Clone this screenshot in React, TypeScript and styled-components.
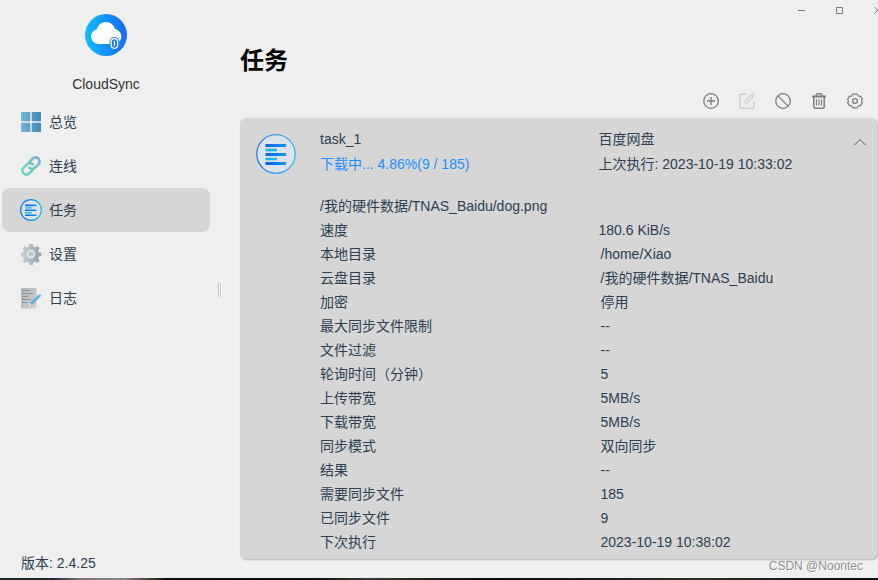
import React, { useState } from "react";
import styled, { createGlobalStyle } from "styled-components";

const GlobalStyle = createGlobalStyle`
  * { box-sizing: border-box; }
  html, body { margin: 0; }
  body {
    background: #efefef;
    color: #2c3e50;
    font-family: "Liberation Sans", "Noto Sans CJK SC", sans-serif;
    font-size: 14px;
    line-height: 24px;
    overflow-x: hidden;
  }
  button { font: inherit; color: inherit; border: 0; padding: 0; background: none; cursor: pointer; }
`;

const AppWindow = styled.div`
  min-height: 100vh;
  display: flex;
  flex-direction: column;
`;

const Body = styled.div`
  flex: 1;
  display: flex;
`;

const Taskbar = styled.div`
  height: 2px;
  background: linear-gradient(90deg, #23262c 0 6%, #77736e 9%, #8c867d 14%, #12110f 19%, #0b0a09 35%, #3b3833 42%, #0c0b0a 55%, #2f2c29 80%, #0b0a09);
`;

const Sidebar = styled.aside`
  width: 212px;
  flex: none;
  padding: 14px 2px 3px;
  display: flex;
  flex-direction: column;
`;

const Brand = styled.div`
  display: flex;
  flex-direction: column;
  align-items: center;
  gap: 16px;
  padding-bottom: 4px;
  color: #333;
`;

const Nav = styled.nav`
  flex: 1;
  display: flex;
  flex-direction: column;
`;

const NavLink = styled.a<{ $active: boolean }>`
  height: 44px;
  display: flex;
  align-items: center;
  gap: 7px;
  padding: 0 18px;
  border-radius: 8px;
  color: inherit;
  text-decoration: none;
  background: ${(p) => (p.$active ? "#d6d6d6" : "transparent")};
`;

const Version = styled.div`
  padding: 0 19px;
`;

const Splitter = styled.div`
  width: 16px;
  flex: none;
  display: flex;
  align-items: center;
  justify-content: center;
`;

const Grip = styled.span`
  width: 4px;
  height: 15px;
  background: linear-gradient(90deg, #c2c2c2 25%, #fff 25% 50%, #c2c2c2 50% 75%, #fff 75%);
`;

const Main = styled.main`
  flex: 1;
  min-width: 0;
  padding: 0 1px 0 12px;
  display: flex;
  flex-direction: column;
`;

const TitleBar = styled.div`
  height: 20px;
  display: flex;
  justify-content: flex-end;
  margin-right: -20px;
`;

const WindowButton = styled.button`
  width: 38px;
  height: 20px;
  display: flex;
  align-items: center;
  justify-content: center;
`;

const PageTitle = styled.h1`
  margin: 0;
  padding: 24px 0 15px;
  font-size: 24px;
  line-height: 34px;
  font-weight: 700;
  color: #000;
`;

const Toolbar = styled.div`
  height: 16px;
  padding-right: 14px;
  margin-bottom: 9px;
  display: flex;
  justify-content: flex-end;
  gap: 20px;
`;

const ToolButton = styled.button`
  width: 16px;
  height: 16px;
  display: flex;
  color: #7b7b7b;
  &:disabled { color: #d2cfcd; cursor: default; }
`;

const Card = styled.section`
  background: #d6d6d6;
  border-radius: 6px;
  box-shadow: 1px 1px 2px rgba(0, 0, 0, 0.25);
  padding: 9px 0 5px;
`;

const CardHeader = styled.header`
  display: grid;
  grid-template-columns: 80px 1fr 1fr;
  position: relative;
`;

const TaskIcon = styled.div`
  padding: 7px 16px 0;
  display: flex;
`;

const Pair = styled.div`
  display: flex;
  flex-direction: column;
  gap: 1px;
`;

const Progress = styled.span`
  color: #1b8fff;
`;

const Collapse = styled.button`
  position: absolute;
  top: 9px;
  right: 11px;
  width: 12px;
  height: 12px;
  display: flex;
  color: #555;
`;

const Details = styled.div`
  padding: 18px 0 0 80px;
`;

const List = styled.dl`
  margin: 0;
`;

const Row = styled.div`
  display: grid;
  grid-template-columns: 1fr 1fr;
`;

const Term = styled.dt``;

const Value = styled.dd<{ $indent: boolean }>`
  margin: 0;
  padding-left: ${(p) => (p.$indent ? 2 : 0)}px;
`;

const Watermark = styled.footer`
  align-self: flex-end;
  padding-right: 14px;
  font-size: 12px;
  line-height: 14px;
  color: #8d8d8d;
  text-shadow: 1px 1px 0 #fff;
`;

const Logo = () => (
  <svg width="42" height="42" viewBox="0 0 42 42" aria-hidden="true">
    <defs>
      <linearGradient id="logo" x1="0" x2="1">
        <stop offset="0" stopColor="#10bdfd" />
        <stop offset="1" stopColor="#1767f3" />
      </linearGradient>
    </defs>
    <circle cx="21" cy="21" r="21" fill="url(#logo)" />
    <path d="M13.500 30a7.500 7.500 0 0 1-1.700-14.800A9.500 9.500 0 0 1 30.200 15.100 7.500 7.500 0 0 1 29 30z" fill="#fff" />
    <path d="M24.500 31V28a5 5 0 0 1 10 0v3z" fill="#1f8bf8" />
    <rect x="26.200" y="24.700" width="6.400" height="9.600" rx="3.200" fill="#1a78f5" stroke="#fff" strokeWidth="1.300" />
    <path d="M29.400 26.800v5.400" stroke="#fff" strokeWidth="1.300" />
  </svg>
);

const OverviewIcon = () => (
  <svg width="22" height="22" viewBox="0 0 22 22" aria-hidden="true">
    <defs>
      <linearGradient id="tiles" x1="0" x2="22" gradientUnits="userSpaceOnUse">
        <stop offset="0" stopColor="#77b9d8" />
        <stop offset="1" stopColor="#4084b8" />
      </linearGradient>
    </defs>
    <path
      fill="url(#tiles)"
      d="M2 1h7.300q1 0 1 1v7.300q0 1-1 1H2q-1 0-1-1V2q0-1 1-1zM12.700 1H20q1 0 1 1v7.300q0 1-1 1h-7.300q-1 0-1-1V2q0-1 1-1zM2 11.700h7.300q1 0 1 1V20q0 1-1 1H2q-1 0-1-1v-7.300q0-1 1-1zM12.700 11.700H20q1 0 1 1V20q0 1-1 1h-7.300q-1 0-1-1v-7.300q0-1 1-1z"
    />
  </svg>
);

const LinkIcon = () => (
  <svg width="22" height="22" viewBox="0 0 22 22" aria-hidden="true">
    <defs>
      <linearGradient id="chain" x1="1" x2="21" y1="14" y2="8" gradientUnits="userSpaceOnUse">
        <stop offset="0" stopColor="#68dfb8" />
        <stop offset="1" stopColor="#79acd0" />
      </linearGradient>
    </defs>
    <g fill="none" stroke="url(#chain)" strokeWidth="2.600" strokeLinecap="round">
      <path d="M9.300 12.700a4 4 0 0 0 5.700 0l3.400-3.400a4 4 0 0 0-5.700-5.700L9.900 6.400" />
      <path d="M12.700 9.300a4 4 0 0 0-5.700 0l-3.400 3.400a4 4 0 0 0 5.700 5.700l2.800-2.800" />
    </g>
  </svg>
);

const TaskListIcon = ({ size, id }: { size: number; id: string }) => (
  <svg width={size} height={size} viewBox="0 0 40 40" aria-hidden="true">
    <defs>
      <linearGradient id={`${id}-ring`} x1="0" x2="1">
        <stop offset="0" stopColor="#0868eb" />
        <stop offset="1" stopColor="#17b5f4" />
      </linearGradient>
      <linearGradient id={`${id}-bar`} x1="9" x2="30" gradientUnits="userSpaceOnUse">
        <stop offset="0" stopColor="#0461ea" />
        <stop offset="1" stopColor="#1597f5" />
      </linearGradient>
    </defs>
    <circle cx="20" cy="20" r={size > 30 ? 19.2 : 18.8} fill="#dbe3ec" stroke={`url(#${id}-ring)`} strokeWidth={size > 30 ? 1.1 : 2} />
    <path d="M9.500 10h20.500v3H9.500zM9.500 19h20.500v3H9.500zM9.500 28h20.500v3H9.500z" fill={`url(#${id}-bar)`} />
    <path d="M9.500 14.800h11.500v2.400H9.500zM9.500 23.800h11.500v2.400H9.500z" fill="#15b9ef" />
  </svg>
);

const SettingsIcon = () => (
  <svg width="22" height="22" viewBox="0 0 22 22" aria-hidden="true">
    <defs>
      <linearGradient id="gear" x1="0" x2="1">
        <stop offset="0" stopColor="#c9d2d6" />
        <stop offset="1" stopColor="#8fa0a5" />
      </linearGradient>
    </defs>
    <path
      fill="url(#gear)"
      d="M9.300 1h3.400l.6 2.700 1.600.7 2.400-1.500 2.300 2.300-1.500 2.400.7 1.700 2.500.5v3.300l-2.500.6-.7 1.600 1.500 2.400-2.300 2.400-2.400-1.500-1.600.7-.6 2.600H9.300l-.6-2.600-1.600-.7-2.400 1.500-2.300-2.400 1.500-2.400-.7-1.600L1 13.100V9.800l2.200-.5.7-1.700-1.500-2.400 2.300-2.300 2.400 1.500 1.600-.7z"
    />
    <circle cx="11" cy="11" r="3.500" fill="#bcc7cb" stroke="#eef1f2" strokeWidth="1.400" />
  </svg>
);

const LogIcon = () => (
  <svg width="22" height="22" viewBox="0 0 22 22" aria-hidden="true">
    <defs>
      <linearGradient id="sheet" x1="0" x2="1" y2="1">
        <stop offset="0" stopColor="#b2b6ba" />
        <stop offset="1" stopColor="#ced2d5" />
      </linearGradient>
    </defs>
    <path d="M1 1h15.500v20.500H1z" fill="url(#sheet)" />
    <path d="M2 3.500h8M2 6.500h10.500M2 9.500h6M2 12.500h9M2 15.500h5" stroke="#858a90" strokeWidth="0.900" />
    <path d="M8.500 19.300l1.200-3.200L19.500 7l2 1.500-9.600 9.500z" fill="#5faee2" />
    <path d="M8.500 19.300l1.200-3.200 2.200 1.900z" fill="#e2edf4" />
    <path d="M18.500 7.900l1-.9 2 1.500-1 1z" fill="#8dc6ec" />
  </svg>
);

const StrokeIcon = ({ children }: { children: React.ReactNode }) => (
  <svg width="16" height="16" viewBox="0 0 16 16" fill="none" stroke="currentColor" strokeWidth="1.300" aria-hidden="true">
    {children}
  </svg>
);

const tools = [
  {
    label: "新建",
    icon: (
      <>
        <circle cx="8" cy="8" r="7.300" />
        <path d="M8 4v8M4 8h8" />
      </>
    ),
  },
  {
    label: "编辑",
    disabled: true,
    icon: (
      <>
        <path d="M8 1.200H2.300q-1.500 0-1.500 1.500v11q0 1.500 1.500 1.500h11q1.500 0 1.500-1.500V8" strokeWidth="1.500" />
        <path d="M6.300 9.900l.5-2.600L13 1.100q1-.7 1.800.1.700.9 0 1.800L8.700 9.200z" />
      </>
    ),
  },
  {
    label: "停止",
    icon: (
      <>
        <circle cx="8" cy="8" r="7.300" />
        <path d="M2.900 2.900l10.200 10.200" />
      </>
    ),
  },
  {
    label: "删除",
    icon: (
      <>
        <path d="M1 3.500h14" strokeWidth="2" />
        <path d="M5 2.800q0-2 1.500-2h3q1.500 0 1.500 2M2.800 4v9.700q0 1.500 1.500 1.500h7.400q1.500 0 1.500-1.500V4" strokeWidth="1.500" />
        <path d="M5.500 6.200v6.300M8 6.200v6.300M10.500 6.200v6.300" strokeWidth="1.100" />
      </>
    ),
  },
  {
    label: "任务设置",
    icon: (
      <>
        <path d="M5.600 1.200h4.800q.6 2.600 3.100 2l1.900 3.200q-1.600 1.600 0 3.200l-1.900 3.200q-2.500-.6-3.100 2H5.600q-.6-2.600-3.100-2L.6 9.600q1.600-1.600 0-3.200l1.900-3.200q2.500.6 3.100-2z" strokeWidth="1.200" strokeLinejoin="round" />
        <circle cx="8" cy="8" r="2.400" />
      </>
    ),
  },
];

const navItems = [
  { label: "总览", icon: <OverviewIcon /> },
  { label: "连线", icon: <LinkIcon /> },
  { label: "任务", icon: <TaskListIcon size={22} id="nav" /> },
  { label: "设置", icon: <SettingsIcon /> },
  { label: "日志", icon: <LogIcon /> },
];

const details: [string, string][] = [
  ["速度", "180.6 KiB/s"],
  ["本地目录", "/home/Xiao"],
  ["云盘目录", "/我的硬件数据/TNAS_Baidu"],
  ["加密", "停用"],
  ["最大同步文件限制", "--"],
  ["文件过滤", "--"],
  ["轮询时间（分钟）", "5"],
  ["上传带宽", "5MB/s"],
  ["下载带宽", "5MB/s"],
  ["同步模式", "双向同步"],
  ["结果", "--"],
  ["需要同步文件", "185"],
  ["已同步文件", "9"],
  ["下次执行", "2023-10-19 10:38:02"],
];

export default function App() {
  const [active, setActive] = useState("任务");
  const [open, setOpen] = useState(true);

  return (
    <AppWindow>
      <GlobalStyle />
      <Body>
        <Sidebar>
          <Brand>
            <Logo />
            CloudSync
          </Brand>
          <Nav>
            {navItems.map((item) => (
              <NavLink
                key={item.label}
                href="#"
                $active={item.label === active}
                aria-current={item.label === active ? "page" : undefined}
                onClick={() => setActive(item.label)}
              >
                {item.icon}
                {item.label}
              </NavLink>
            ))}
          </Nav>
          <Version>版本: 2.4.25</Version>
        </Sidebar>
        <Splitter>
          <Grip />
        </Splitter>
        <Main>
          <TitleBar>
            <WindowButton aria-label="最小化">
              <svg width="8" height="8" stroke="#777" fill="none"><path d="M0 4.500h7" /></svg>
            </WindowButton>
            <WindowButton aria-label="最大化">
              <svg width="8" height="8" stroke="#777" fill="none"><path d="M0.500 1.500h6v6h-6z" /></svg>
            </WindowButton>
            <WindowButton aria-label="关闭">
              <svg width="8" height="8" stroke="#777" fill="none"><path d="M0.500 1l6.500 6.500M7 1L0.500 7.500" /></svg>
            </WindowButton>
          </TitleBar>
          <PageTitle>任务</PageTitle>
          <Toolbar>
            {tools.map((tool) => (
              <ToolButton key={tool.label} aria-label={tool.label} disabled={tool.disabled}>
                <StrokeIcon>{tool.icon}</StrokeIcon>
              </ToolButton>
            ))}
          </Toolbar>
          <Card>
            <CardHeader>
              <TaskIcon>
                <TaskListIcon size={40} id="task" />
              </TaskIcon>
              <Pair>
                <span>task_1</span>
                <Progress>下载中... 4.86%(9 / 185)</Progress>
              </Pair>
              <Pair>
                <span>百度网盘</span>
                <span>上次执行: 2023-10-19 10:33:02</span>
              </Pair>
              <Collapse aria-label="收起" aria-expanded={open} onClick={() => setOpen(!open)}>
                <svg width="12" height="12" fill="none" stroke="currentColor"><path d="M0.500 9L6 3.500 11.500 9" /></svg>
              </Collapse>
            </CardHeader>
            {open && (
              <Details>
                <div>/我的硬件数据/TNAS_Baidu/dog.png</div>
                <List>
                  {details.map(([term, value], i) => (
                    <Row key={term}>
                      <Term>{term}</Term>
                      <Value $indent={i > 0}>{value}</Value>
                    </Row>
                  ))}
                </List>
              </Details>
            )}
          </Card>
          <Watermark>CSDN @Noontec</Watermark>
        </Main>
      </Body>
      <Taskbar />
    </AppWindow>
  );
}
